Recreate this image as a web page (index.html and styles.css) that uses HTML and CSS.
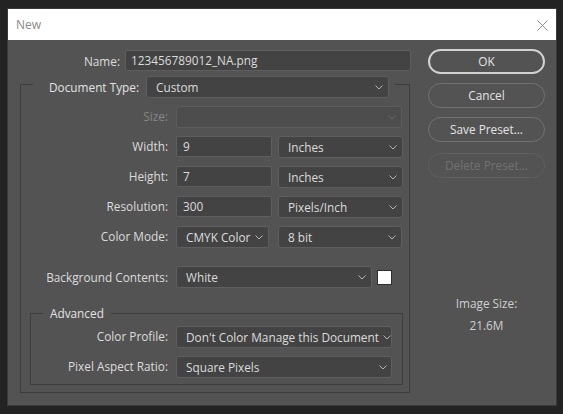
FILE: index.html
```html
<!DOCTYPE html>
<html lang="en">

<head>
    <meta charset="UTF-8">
    <meta name="viewport" content="width=device-width, initial-scale=1.0">
    <title>New</title>
    <link rel="stylesheet" href="styles.css">
</head>

<body>
    <div class="dialog">
        <div class="titlebar">
            <span class="title">New</span>
            <svg class="close" width="11" height="11" viewBox="0 0 11 11">
                <path d="M0.5 0.5 L10.5 10.5 M10.5 0.5 L0.5 10.5" stroke="#8c8c8c" stroke-width="1" fill="none" />
            </svg>
        </div>

        <div class="content">
            <div class="left">
                <div class="name-row">
                    <label class="name-label">Name:</label>
                    <div class="input name-input">123456789012_NA.png</div>
                </div>

                <fieldset class="outer">
                    <legend class="doc-legend">
                        <span class="doc-label">Document Type:</span>
                        <div class="select doc-select"><span>Custom</span>
                            <svg class="chev" width="8" height="5" viewBox="0 0 8 5"><path d="M0.5 0.5 L4 4 L7.5 0.5" /></svg>
                        </div>
                    </legend>

                    <div class="row">
                        <label class="lbl disabled">Size:</label>
                        <div class="select dis w-full"><span></span>
                            <svg class="chev" width="8" height="5" viewBox="0 0 8 5"><path d="M0.5 0.5 L4 4 L7.5 0.5" /></svg>
                        </div>
                    </div>
                    <div class="row">
                        <label class="lbl">Width:</label>
                        <div class="input w-num">9</div>
                        <div class="select w-unit"><span>Inches</span>
                            <svg class="chev" width="8" height="5" viewBox="0 0 8 5"><path d="M0.5 0.5 L4 4 L7.5 0.5" /></svg>
                        </div>
                    </div>
                    <div class="row">
                        <label class="lbl">Height:</label>
                        <div class="input w-num">7</div>
                        <div class="select w-unit"><span>Inches</span>
                            <svg class="chev" width="8" height="5" viewBox="0 0 8 5"><path d="M0.5 0.5 L4 4 L7.5 0.5" /></svg>
                        </div>
                    </div>
                    <div class="row">
                        <label class="lbl">Resolution:</label>
                        <div class="input w-num">300</div>
                        <div class="select w-unit"><span>Pixels/Inch</span>
                            <svg class="chev" width="8" height="5" viewBox="0 0 8 5"><path d="M0.5 0.5 L4 4 L7.5 0.5" /></svg>
                        </div>
                    </div>
                    <div class="row">
                        <label class="lbl">Color Mode:</label>
                        <div class="select w-mode"><span>CMYK Color</span>
                            <svg class="chev" width="8" height="5" viewBox="0 0 8 5"><path d="M0.5 0.5 L4 4 L7.5 0.5" /></svg>
                        </div>
                        <div class="select w-bit"><span>8 bit</span>
                            <svg class="chev" width="8" height="5" viewBox="0 0 8 5"><path d="M0.5 0.5 L4 4 L7.5 0.5" /></svg>
                        </div>
                    </div>
                    <div class="row bg-row">
                        <label class="lbl">Background Contents:</label>
                        <div class="select w-bg"><span>White</span>
                            <svg class="chev" width="8" height="5" viewBox="0 0 8 5"><path d="M0.5 0.5 L4 4 L7.5 0.5" /></svg>
                        </div>
                        <div class="swatch"></div>
                    </div>

                    <fieldset class="inner">
                        <legend class="adv-legend">Advanced</legend>
                        <div class="row">
                            <label class="lbl in">Color Profile:</label>
                            <div class="select w-adv"><span>Don't Color Manage this Document</span>
                                <svg class="chev" width="8" height="5" viewBox="0 0 8 5"><path d="M0.5 0.5 L4 4 L7.5 0.5" /></svg>
                            </div>
                        </div>
                        <div class="row">
                            <label class="lbl in">Pixel Aspect Ratio:</label>
                            <div class="select w-adv"><span>Square Pixels</span>
                                <svg class="chev" width="8" height="5" viewBox="0 0 8 5"><path d="M0.5 0.5 L4 4 L7.5 0.5" /></svg>
                            </div>
                        </div>
                    </fieldset>
                </fieldset>
            </div>

            <div class="right">
                <div class="btn primary">OK</div>
                <div class="btn">Cancel</div>
                <div class="btn">Save Preset...</div>
                <div class="btn off">Delete Preset...</div>
                <div class="img-size">
                    <p>Image Size:</p>
                    <p>21.6M</p>
                </div>
            </div>
        </div>
    </div>
</body>

</html>
```

FILE: styles.css
```css
* {
    margin: 0;
    padding: 0;
    box-sizing: border-box;
}

body {
    background: #232323;
    font-family: "Open Sans", "Noto Sans", sans-serif;
    font-size: 11.8px;
    color: #dcdcdc;
}

.dialog {
    width: 550px;
    height: 398px;
    margin: 8px 0 0 7px;
    border: 1px solid #3a3a3a;
    background: #535353;
}

.titlebar {
    height: 31px;
    background: #ffffff;
    display: flex;
    align-items: center;
    justify-content: space-between;
    padding: 0 8px 0 8px;
}

.title {
    color: #8a8a8a;
    font-size: 12px;
}

.close {
    margin-top: 1px;
}

.content {
    display: flex;
}

.left {
    width: 404px;
    margin-left: 12px;
}

.name-row {
    display: flex;
    align-items: center;
    padding-top: 10px;
}

.name-label {
    width: 100px;
    margin-right: 5px;
    text-align: right;
}

.input,
.select {
    height: 22px;
    background: #434343;
    border: 1px solid #5e5e5e;
    border-radius: 2px;
    line-height: 20px;
    white-space: nowrap;
    overflow: hidden;
}

.input {
    height: 21px;
    padding-left: 6px;
    line-height: 19px;
}

.name-input {
    width: 286px;
    padding-left: 5px;
}

.select {
    display: flex;
    align-items: center;
    justify-content: space-between;
    padding: 0 5px 0 9px;
    border-radius: 3px;
}

.chev {
    flex-shrink: 0;
    margin-left: 4px;
}

.chev path {
    fill: none;
    stroke: #b4b4b4;
    stroke-width: 1;
}

.dis {
    background: #4d4d4d;
    border-color: #5c5c5c;
}

.dis .chev path {
    stroke: #6a6a6a;
}

fieldset {
    border: 1px solid #3d3d3d;
    min-width: 0;
}

.outer {
    width: 390px;
    padding: 8px 6px 7px 0;
}

.doc-legend {
    display: flex;
    align-items: center;
    margin-left: 12px;
    padding: 5px 6px 0 6px;
}

.doc-label {
    width: 100px;
    text-align: right;
    margin-right: 7px;
    color: #e2e2e2;
}

.doc-select {
    width: 243px;
}

.row {
    display: flex;
    align-items: flex-start;
    height: 22px;
    margin-bottom: 8px;
}

.lbl {
    width: 147px;
    margin-right: 8px;
    text-align: right;
    line-height: 21px;
}

.lbl.in {
    width: 137px;
}

.disabled {
    color: #858585;
}

.w-full {
    width: 226px;
}

.w-num {
    width: 96px;
    margin-right: 6px;
}

.w-unit {
    width: 125px;
}

.w-mode {
    width: 93px;
    margin-right: 9px;
    padding-right: 5px;
}

.w-bit {
    width: 124px;
}

.bg-row {
    margin-top: 18px;
    align-items: center;
}

.w-bg {
    width: 196px;
    margin-right: 5px;
}

.swatch {
    width: 15px;
    height: 15px;
    background: #ffffff;
    border: 1px solid #2e2e2e;
}

.inner {
    margin: 17px 0 0 9px;
    width: 373px;
    padding: 5px 9px 0 0;
}

.inner .row:last-child {
    margin-bottom: 6px;
}

.adv-legend {
    margin-left: 12px;
    padding: 0 7px;
    line-height: 16px;
    color: #e2e2e2;
}

.w-adv {
    width: 216px;
    padding-right: 4px;
}

.right {
    width: 117px;
    margin-left: 4px;
    padding-top: 9px;
    display: flex;
    flex-direction: column;
}

.btn {
    height: 25px;
    border: 1px solid #727272;
    border-radius: 13px;
    text-align: center;
    line-height: 23px;
    margin-bottom: 9px;
    color: #e4e4e4;
}

.btn.primary {
    border: 2px solid #d2d2d2;
    line-height: 21px;
}

.btn.off {
    color: #727272;
    border-color: #5f5f5f;
    margin-top: 2px;
}

.img-size {
    margin-top: 105px;
    text-align: center;
    color: #d0d0d0;
}

.img-size p {
    line-height: 22px;
}
```
